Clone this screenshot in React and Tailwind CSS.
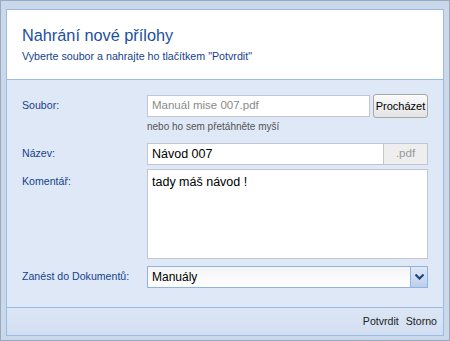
import React from 'react';

const labelCls = 'w-[125px] shrink-0 text-[10.6px] text-[#15428b]';

export default function App() {
  return (
    <div
      className="w-[450px] h-[341px] bg-[#cbd8ea] border border-[#98a9c4] pl-[5px] pr-[5px] pt-[8px] pb-[4px]"
      style={{ fontFamily: '"Liberation Sans", Arial, sans-serif' }}
    >
      <div className="h-full flex flex-col border border-[#99bbe8] bg-[#dfe8f6]">
        {/* Header */}
        <div className="h-[70px] shrink-0 bg-white border-b border-[#99bbe8] px-[15px] pt-[15px]">
          <div className="text-[16.3px] leading-[20px] text-[#1c4f9c]">Nahrání nové přílohy</div>
          <div className="mt-[4px] text-[10.7px] leading-[14px] text-[#15428b]">
            Vyberte soubor a nahrajte ho tlačítkem "Potvrdit"
          </div>
        </div>

        {/* Body */}
        <div className="flex-1 pl-[15px] pr-[15px] pt-[15px]">
          <div className="flex items-center h-[22px]">
            <div className={labelCls}>Soubor:</div>
            <div className="flex-1 h-[22px] bg-white border border-[#c2c6d2] px-[4px] flex items-center text-[11.5px] text-[#8a8a8a]">
              Manuál mise 007.pdf
            </div>
            <button className="ml-[3px] -my-px h-[24px] w-[55px] px-0 rounded-[3px] border border-[#a8a8a8] bg-gradient-to-b from-[#fafafa] to-[#e4e4e4] text-[11px] text-black">
              Procházet
            </button>
          </div>
          <div className="mt-[3px] pl-[125px] text-[10px] leading-[14px] text-[#555]">
            nebo ho sem přetáhněte myší
          </div>

          <div className="mt-[9px] flex items-center h-[22px]">
            <div className={labelCls}>Název:</div>
            <div className="flex-1 h-[22px] flex">
              <div className="flex-1 bg-white border border-[#c2c6d2] px-[4px] flex items-center text-[12.5px] text-black">
                Návod 007
              </div>
              <div className="w-[44px] bg-[#eeeeee] border border-l-0 border-[#c2c6d2] flex items-center justify-center text-[11.5px] text-[#999]">
                .pdf
              </div>
            </div>
          </div>

          <div className="mt-[4px] flex h-[90px]">
            <div className={labelCls + ' pt-[5px]'}>Komentář:</div>
            <div className="flex-1 bg-white border border-[#c2c6d2] px-[4px] pt-[3px] text-[12.5px] leading-[18px] text-black">
              tady máš návod !
            </div>
          </div>

          <div className="mt-[7px] flex items-center h-[22px]">
            <div className={labelCls}>Zanést do Dokumentů:</div>
            <div className="flex-1 h-[22px] flex border border-[#8fb3e3] bg-gradient-to-b from-[#f4f4f4] to-white">
              <div className="flex-1 px-[4px] flex items-center text-[12px] text-black">Manuály</div>
              <div className="w-[17px] border-l border-[#8fb3e3] bg-gradient-to-b from-[#dfe9f6] to-[#bccfe9] flex items-center justify-center">
                <svg width="9" height="6" viewBox="0 0 9 6">
                  <path d="M0.5 0.5 L4.5 4.5 L8.5 0.5" fill="none" stroke="#1f3f7a" strokeWidth="2" />
                </svg>
              </div>
            </div>
          </div>
        </div>

        {/* Footer */}
        <div className="h-[28px] shrink-0 border-t border-[#99bbe8] bg-gradient-to-b from-[#dce6f4] to-[#d2dff1] flex items-center justify-end gap-[7px] pr-[6px] text-[10.6px] text-[#222]">
          <span>Potvrdit</span>
          <span>Storno</span>
        </div>
      </div>
    </div>
  );
}
